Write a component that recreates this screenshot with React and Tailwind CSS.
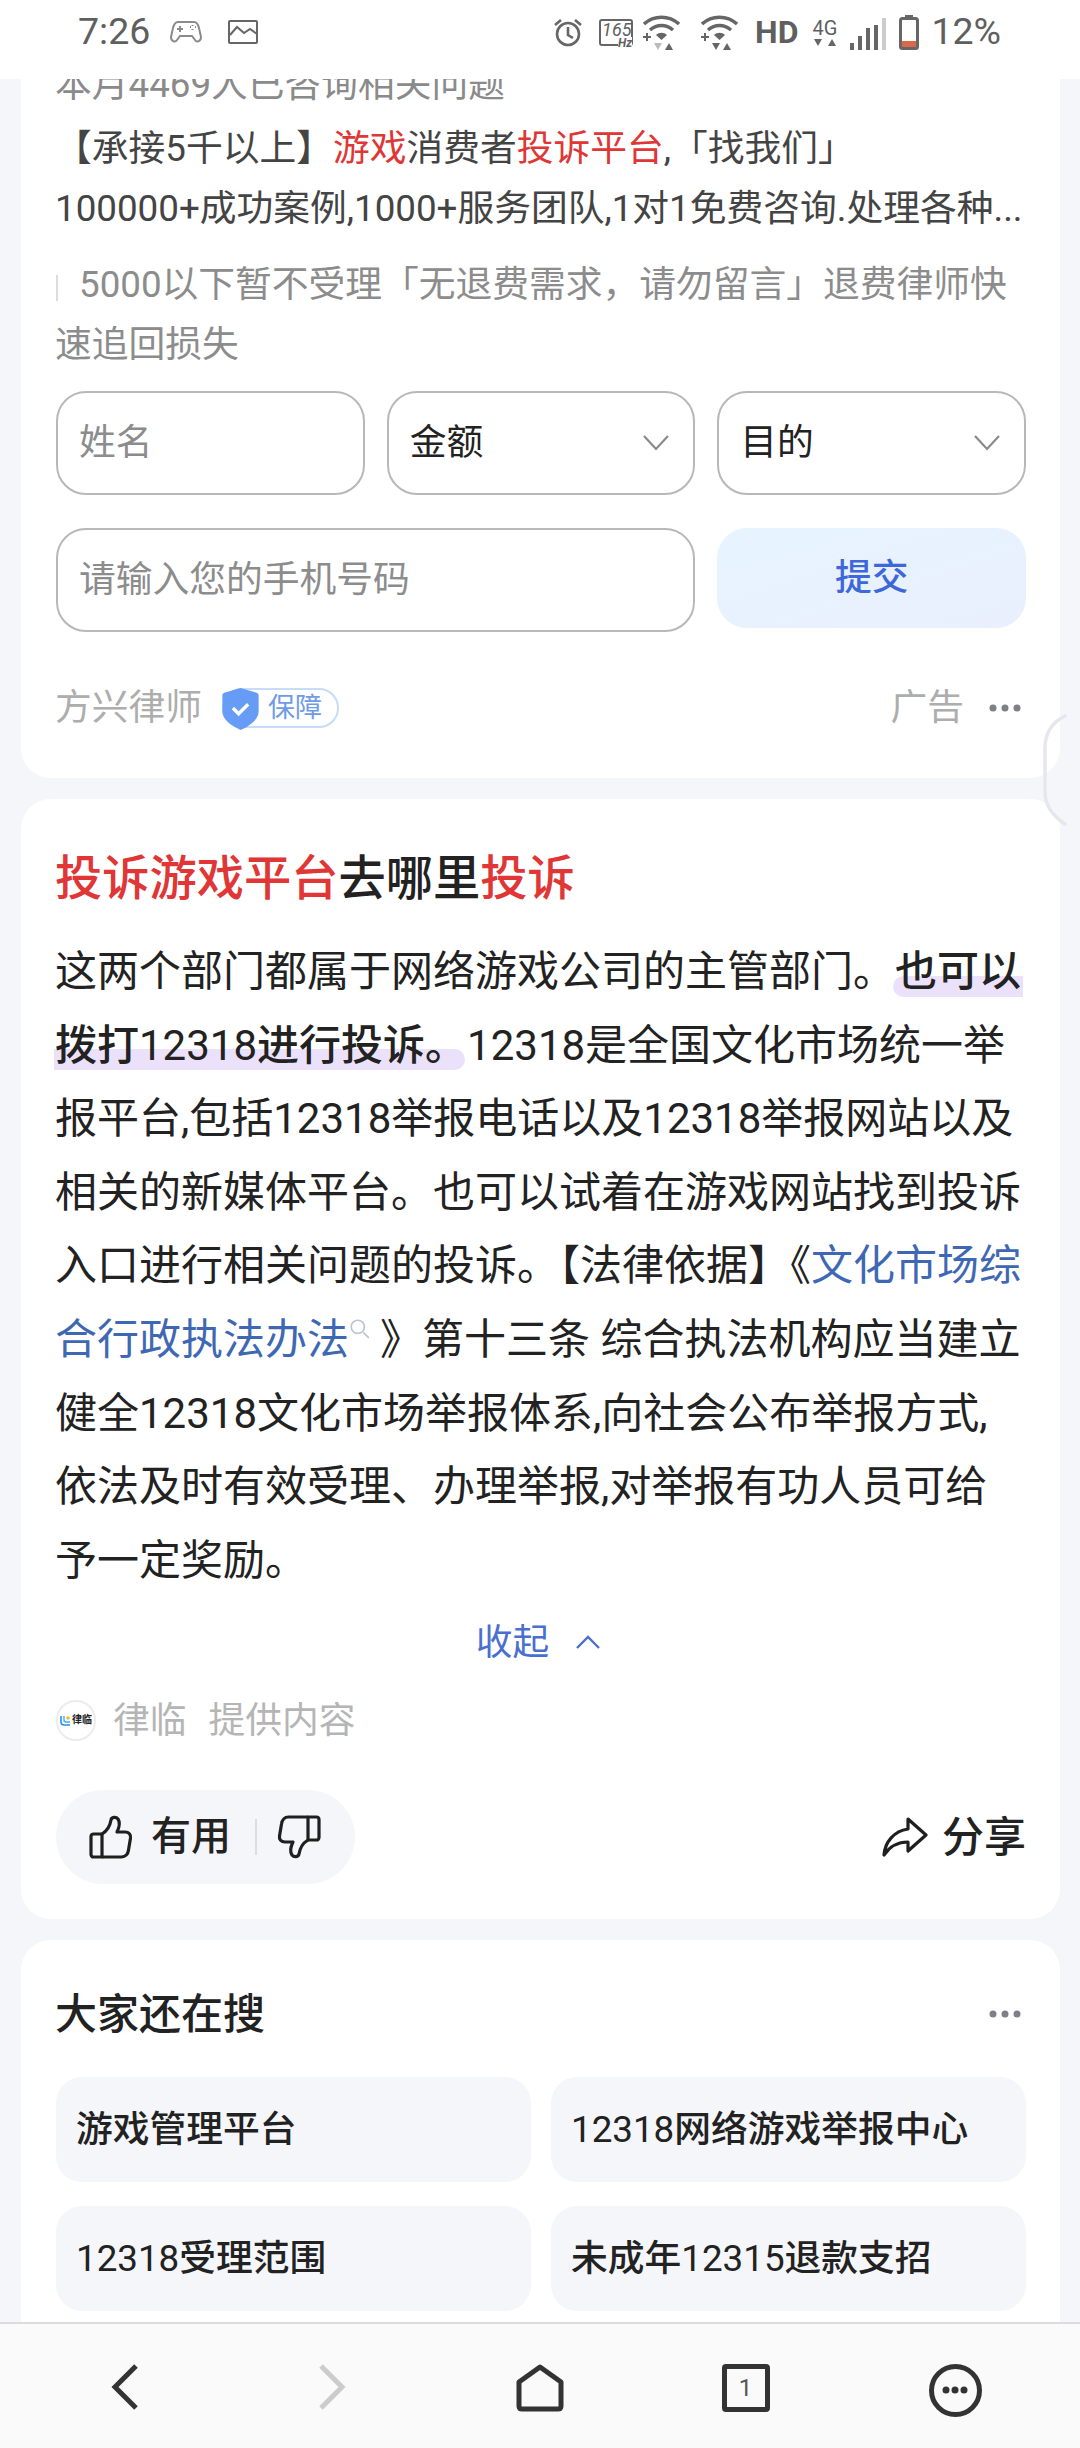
import React from 'react';

const FONT = "font-['Roboto','Noto_Sans_CJK_SC',sans-serif]";

const AlarmIcon = () => (
  <svg width="30" height="30" viewBox="0 0 30 30" fill="none" stroke="#666" strokeWidth="2.6">
    <circle cx="15" cy="17" r="11" />
    <path d="M15 10v8l5 3" />
    <path d="M2 8l6-5M28 8l-6-5" />
  </svg>
);

const WifiIcon = ({ down = '#666' }) => (
  <svg width="37" height="36" viewBox="0 0 37 36">
    <g fill="none" stroke="#666" strokeWidth="3.4">
      <path d="M1 10c10-9 25-9 35 0" />
      <path d="M7 16c7-6 16-6 23 0" />
    </g>
    <path d="M13 21c3-3 8-3 11 0l-5.500 5z" fill="#666" />
    <path d="M0 23h8M4 19v8" stroke="#666" strokeWidth="2" />
    <path d="M11 29h8l-4 7z" fill={down} />
    <path d="M22 36l4-7 4 7z" fill="#666" />
  </svg>
);

const SignalIcon = () => (
  <svg width="37" height="32" viewBox="0 0 37 32" fill="#666">
    <rect x="0" y="25" width="4" height="7" />
    <rect x="8" y="18" width="4" height="14" />
    <rect x="16" y="10" width="4" height="22" />
    <rect x="24" y="7" width="4" height="25" />
    <rect x="32" y="0" width="4" height="32" fill="#ccc" />
  </svg>
);

const BatteryIcon = () => (
  <svg width="20" height="35" viewBox="0 0 20 35">
    <path d="M6 0h8v3H6z" fill="#666" />
    <rect x="1.500" y="3.500" width="17" height="30" rx="2" fill="none" stroke="#666" strokeWidth="3" />
    <rect x="3" y="26" width="14" height="6" fill="#d9694a" />
  </svg>
);

const GameIcon = () => (
  <svg width="32" height="24" viewBox="0 0 32 24" fill="none" stroke="#8a8a8a" strokeWidth="2">
    <path d="M8 2h16c3 0 4 2 5 6l2 9c0 4-4 6-6 3l-3-4H10l-3 4c-2 3-6 1-6-3l2-9c1-4 2-6 5-6z" />
    <path d="M7 9h6M10 6v6M20 7h1M25 7h1M22.500 5v1M22.500 9v1" />
  </svg>
);

const PictureIcon = () => (
  <svg width="30" height="24" viewBox="0 0 30 24" fill="none" stroke="#666" strokeWidth="2">
    <rect x="1" y="1" width="28" height="22" rx="1" />
    <path d="M2 15l7-8 7 6 6-4 7 5" />
  </svg>
);

const ChevronDown = () => (
  <svg width="26" height="16" viewBox="0 0 26 16" fill="none" stroke="#8a8a8a" strokeWidth="2.2">
    <path d="M1 1l12 13L25 1" />
  </svg>
);

const Dots = ({ color = '#7f7f87' }) => (
  <svg width="32" height="8" viewBox="0 0 32 8" fill={color}>
    <circle cx="4" cy="4" r="3.500" />
    <circle cx="16" cy="4" r="3.500" />
    <circle cx="28" cy="4" r="3.500" />
  </svg>
);

const ThumbUp = ({ flip }) => (
  <svg width="44" height="44" viewBox="0 0 44 44" fill="none" stroke="#1f1f1f" strokeWidth="3.200" strokeLinejoin="round" className={flip ? 'rotate-180' : ''}>
    <path d="M4.500 19H13v23H4.500A2.500 2.500 0 0 1 2 39.500v-18A2.500 2.500 0 0 1 4.500 19z" />
    <path d="M13 19c5-3 8-8 9-14 .5-3 5-3.500 7-1 2 3 1.500 8-1 13h8c4 0 6 2.500 5.500 6l-2 12c-.5 4-3 7-7 7H13" />
  </svg>
);

const ShareIcon = () => (
  <svg width="46" height="40" viewBox="0 0 46 40" fill="none" stroke="#1f1f1f" strokeWidth="3.200" strokeLinejoin="round">
    <path d="M26 2l18 16-18 16v-9C15 25 8 29 2 38c1-13 10-24 24-26z" />
  </svg>
);

const ShieldBadge = () => (
  <div className="relative flex h-[40px] w-[117px] items-center justify-end rounded-full border-2 border-[#c7dcf8] pr-[15px]">
    <svg width="37" height="42" viewBox="0 0 38 44" className="absolute left-[-2px] top-[-2px]">
      <path d="M19 0l17 5c2 1 2 2 2 3v17c0 8-10 15-19 19C10 40 0 33 0 25V8c0-1 0-2 2-3z" fill="#669cf5" />
      <path d="M11 21l6 6 10-10" fill="none" stroke="#fff" strokeWidth="3.500" />
    </svg>
    <span className="text-[27px] leading-none text-[#6f9be6]">保障</span>
  </div>
);

const Digits = ({ children }) => <span className="font-normal">{children}</span>;

const searches = [
  [<>游戏管理平台</>, <><Digits>12318</Digits>网络游戏举报中心</>],
  [<><Digits>12318</Digits>受理范围</>, <>未成年<Digits>12315</Digits>退款支招</>],
];

export default function App() {
  return (
    <div className={`${FONT} relative flex h-[2448px] w-[1080px] flex-col overflow-hidden bg-[#f5f6fa]`}>
      {/* status bar */}
      <div className="z-10 flex h-[79px] shrink-0 items-center bg-white pb-[15px] pl-[78px] pr-[79px] text-[#5f5f5f]">
        <span className="text-[37.500px] leading-none">7:26</span>
        <div className="ml-[20px] flex items-center gap-[26px]">
          <GameIcon />
          <PictureIcon />
        </div>
        <div className="ml-auto flex items-center">
          <AlarmIcon />
          <div className="relative ml-[16px] h-[27px] w-[34px] rounded-[3px] border-2 border-[#666]">
            <span className="absolute left-[1px] top-[-1px] text-[18px] italic leading-[20px]">165</span>
            <span className="absolute right-[-1px] bottom-[-5px] bg-white text-[12px] font-bold italic leading-none">Hz</span>
          </div>
          <div className="ml-[10px]"><WifiIcon down="#bbb" /></div>
          <div className="ml-[21px]"><WifiIcon /></div>
          <span className="ml-[17px] text-[32px] font-bold leading-none">HD</span>
          <div className="ml-[14px] flex flex-col items-center">
            <span className="text-[20px] leading-[20px]">4G</span>
            <svg width="22" height="9" viewBox="0 0 22 9" fill="#666"><path d="M0 1h8l-4 7zM14 8l4-7 4 7z" /></svg>
          </div>
          <div className="ml-[13px] mt-[3px]"><SignalIcon /></div>
          <div className="ml-[12px]"><BatteryIcon /></div>
          <span className="ml-[12px] text-[37.500px] leading-none">12%</span>
        </div>
      </div>

      {/* page content */}
      <div className="flex min-h-0 flex-1 flex-col gap-[21px] overflow-hidden pl-[21px] pr-[20px]">
        <section className="relative mt-[-19px] shrink-0 rounded-b-[30px] bg-white pb-[48px] pl-[35px] pr-[34px]">
          <p className="-ml-[1px] whitespace-nowrap text-[36.750px] leading-[50px] text-[#8a8a8a]">本月4469人已咨询相关问题</p>
          <p className="-ml-[1px] mt-[9px] whitespace-nowrap text-[36.750px] leading-[60px] text-[#444]">
            【承接5千以上】<span className="text-[#e03636]">游戏</span>消费者<span className="text-[#e03636]">投诉平台</span>,「找我们」
          </p>
          <p className="-ml-[1px] whitespace-nowrap text-[36.750px] leading-[60px] text-[#444]">100000+成功案例,1000+服务团队,1对1免费咨询.处理各种...</p>
          <p className="mt-[16px] whitespace-nowrap text-[36.750px] leading-[60px] text-[#8c8c8c]">
            <span className="mr-[21px] inline-block h-[26px] w-[2px] bg-[#ddd] align-[-4px]" />5000以下暂不受理「无退费需求，请勿留言」退费律师快
          </p>
          <p className="-ml-[1px] text-[36.750px] leading-[60px] text-[#8c8c8c]">速追回损失</p>

          <div className="mt-[16px] grid grid-cols-3 gap-x-[22px]">
            <div className="flex h-[104px] items-center rounded-[30px] border-2 border-[#b8b8b8] px-[21px] text-[36.750px] text-[#8c8c8c]">姓名</div>
            <div className="flex h-[104px] items-center justify-between rounded-[30px] border-2 border-[#b8b8b8] pl-[21px] pr-[24px] text-[36.750px] text-[#222]">
              金额
              <ChevronDown />
            </div>
            <div className="flex h-[104px] items-center justify-between rounded-[30px] border-2 border-[#b8b8b8] pl-[21px] pr-[24px] text-[36.750px] text-[#222]">
              目的
              <ChevronDown />
            </div>
          </div>
          <div className="mt-[33px] grid grid-cols-3 gap-x-[22px]">
            <div className="col-span-2 flex h-[104px] items-center rounded-[30px] border-2 border-[#b8b8b8] px-[21px] text-[36.750px] text-[#8c8c8c]">请输入您的手机号码</div>
            <div className="flex h-[100px] items-center justify-center rounded-[30px] bg-gradient-to-br from-[#e7f4ff] to-[#e9effd] text-[36.750px] font-medium text-[#3e67dc]">提交</div>
          </div>

          <div className="mt-[54px] flex h-[44px] items-center text-[36.750px] text-[#adadad]">
            <span className="-ml-[1px]">方兴律师</span>
            <div className="ml-[20px]"><ShieldBadge /></div>
            <span className="ml-auto">广告</span>
            <div className="ml-[25px] mr-[5px]"><Dots /></div>
          </div>
        </section>

        <section className="shrink-0 rounded-[30px] bg-white pb-[35px] pl-[35px] pr-[34px] pt-[46px]">
          <h2 className="-ml-[1px] whitespace-nowrap text-[47.250px] font-medium leading-[68px] text-[#222]">
            <span className="text-[#e03636]">投诉游戏平台</span>去哪里<span className="text-[#e03636]">投诉</span>
          </h2>
          <div className="-ml-[1px] mt-[22px] whitespace-nowrap text-[42px] leading-[73.600px] text-[#222]">
            <div>
              这两个部门都属于网络游戏公司的主管部门。
              <span className="relative inline-block font-medium">
                <span className="absolute bottom-[12px] left-[-2px] right-[-2px] h-[21px] rounded-l-[14px] bg-[#ebe1fb]" />
                <span className="relative">也可以</span>
              </span>
            </div>
            <div>
              <span className="relative inline-block font-medium">
                <span className="absolute bottom-[12px] left-[-1px] right-[2px] h-[21px] rounded-r-[14px] bg-[#ebe1fb]" />
                <span className="relative">拨打<Digits>12318</Digits>进行投诉。</span>
              </span>
              12318是全国文化市场统一举
            </div>
            <div>报平台,包括12318举报电话以及12318举报网站以及</div>
            <div>相关的新媒体平台。也可以试着在游戏网站找到投诉</div>
            <div>入口进行相关问题的投诉。【法律依据】《<span className="text-[#3f68b4]">文化市场综</span></div>
            <div><span className="text-[#3f68b4]">合行政执法办法</span><svg width="22" height="22" viewBox="0 0 20 20" fill="none" stroke="#b9c4d6" strokeWidth="1.500" className="mr-[9px] inline align-[14px]"><circle cx="8" cy="8" r="6" /><path d="M13 13l5 5" /></svg>》第十三条 综合执法机构应当建立</div>
            <div>健全12318文化市场举报体系,向社会公布举报方式,</div>
            <div>依法及时有效受理、办理举报,对举报有功人员可给</div>
            <div>予一定奖励。</div>
          </div>

          <div className="mt-[20px] flex h-[50px] items-center justify-center pr-[6px] text-[36.750px] text-[#4a6fd0]">
            <span>收起</span>
            <svg width="24" height="14" viewBox="0 0 24 14" fill="none" stroke="#4a6fd0" strokeWidth="2.400" className="ml-[27px]"><path d="M1 13L12 2l11 11" /></svg>
          </div>

          <div className="mt-[32px] flex h-[42px] items-center text-[36.750px] text-[#b5b5b5]">
            <div className="flex h-[41px] w-[40px] items-center justify-center gap-[1px] rounded-full border-2 border-[#ececec]">
              <svg width="11" height="11" viewBox="0 0 11 11" fill="none" className="shrink-0">
                <path d="M1 1v6c0 2 1 3 3 3h6" stroke="#2f8ee8" strokeWidth="1.600" />
                <path d="M4 1v4c0 1 .5 2 2 2h4" stroke="#35b5e8" strokeWidth="1.400" />
                <circle cx="8" cy="3" r="1.800" fill="#f2b632" />
              </svg>
              <span className="whitespace-nowrap text-[10px] font-bold leading-none text-[#222]">律临</span>
            </div>
            <span className="ml-[17px]">律临</span>
            <span className="ml-[22px]">提供内容</span>
          </div>

          <div className="mt-[49px] flex items-center justify-between">
            <div className="flex h-[94px] w-[299px] items-center rounded-full bg-[#f5f6fa] pl-[33px]">
              <ThumbUp />
              <span className="ml-[18px] text-[40px] font-medium text-[#222]">有用</span>
              <span className="ml-[24px] h-[36px] w-[2px] bg-[#ddd]" />
              <div className="ml-[20px]"><ThumbUp flip /></div>
            </div>
            <div className="flex items-center">
              <ShareIcon />
              <span className="ml-[14px] text-[42px] font-medium text-[#222]">分享</span>
            </div>
          </div>
        </section>

        <section className="flex-1 rounded-t-[30px] bg-white pl-[35px] pr-[34px] pt-[47px]">
          <div className="flex h-[54px] items-center justify-between">
            <h3 className="-ml-[1px] text-[42px] font-medium text-[#222]">大家还在搜</h3>
            <div className="mr-[5px]"><Dots /></div>
          </div>
          <div className="mt-[36px] flex flex-col gap-[24px]">
            {searches.map((row, i) => (
              <div key={i} className="grid grid-cols-2 gap-x-[20px]">
                {row.map((t, j) => (
                  <div key={j} className="flex h-[105px] items-center whitespace-nowrap rounded-[26px] bg-[#f5f6fa] px-[20px] text-[36.750px] font-medium text-[#222]">{t}</div>
                ))}
              </div>
            ))}
          </div>
        </section>
      </div>

      {/* edge handle sitting over the cards */}
      <svg width="24" height="112" viewBox="0 0 24 112" fill="none" stroke="#e6e7ee" strokeWidth="3.500" strokeLinecap="round" className="absolute left-[1043px] top-[714px]">
        <path d="M22 2C10 8 2 18 2 34v44c0 14 8 24 20 32" />
      </svg>

      {/* bottom nav */}
      <nav className="z-10 flex h-[126px] shrink-0 items-center border-t-2 border-[#dcdcdc] bg-[#fafafa] pt-[8px]">
        <div className="grid w-full grid-cols-5 px-[21px]">
          <div className="flex justify-center">
            <svg width="28" height="46" viewBox="0 0 28 46" fill="none" stroke="#333" strokeWidth="5"><path d="M25 2L4 23l21 21" /></svg>
          </div>
          <div className="flex justify-center">
            <svg width="28" height="46" viewBox="0 0 28 46" fill="none" stroke="#ccc" strokeWidth="5"><path d="M3 2l21 21L3 44" /></svg>
          </div>
          <div className="flex justify-center">
            <svg width="48" height="48" viewBox="0 0 48 48" fill="none" stroke="#333" strokeWidth="5" strokeLinejoin="round"><path d="M24 3L3 18v24c0 2 1 3 3 3h36c2 0 3-1 3-3V18z" /></svg>
          </div>
          <div className="flex justify-center">
            <div className="flex h-[48px] w-[48px] -translate-x-[2px] items-center justify-center rounded-[4px] border-[5px] border-[#333] text-[24px] leading-none text-[#555]">1</div>
          </div>
          <div className="flex justify-center">
            <div className="flex h-[53px] w-[53px] items-center justify-center rounded-full border-[5px] border-[#333]">
              <svg width="26" height="8" viewBox="0 0 26 8" fill="#333"><circle cx="4" cy="4" r="3.500" /><circle cx="13" cy="4" r="3.500" /><circle cx="22" cy="4" r="3.500" /></svg>
            </div>
          </div>
        </div>
      </nav>
    </div>
  );
}
